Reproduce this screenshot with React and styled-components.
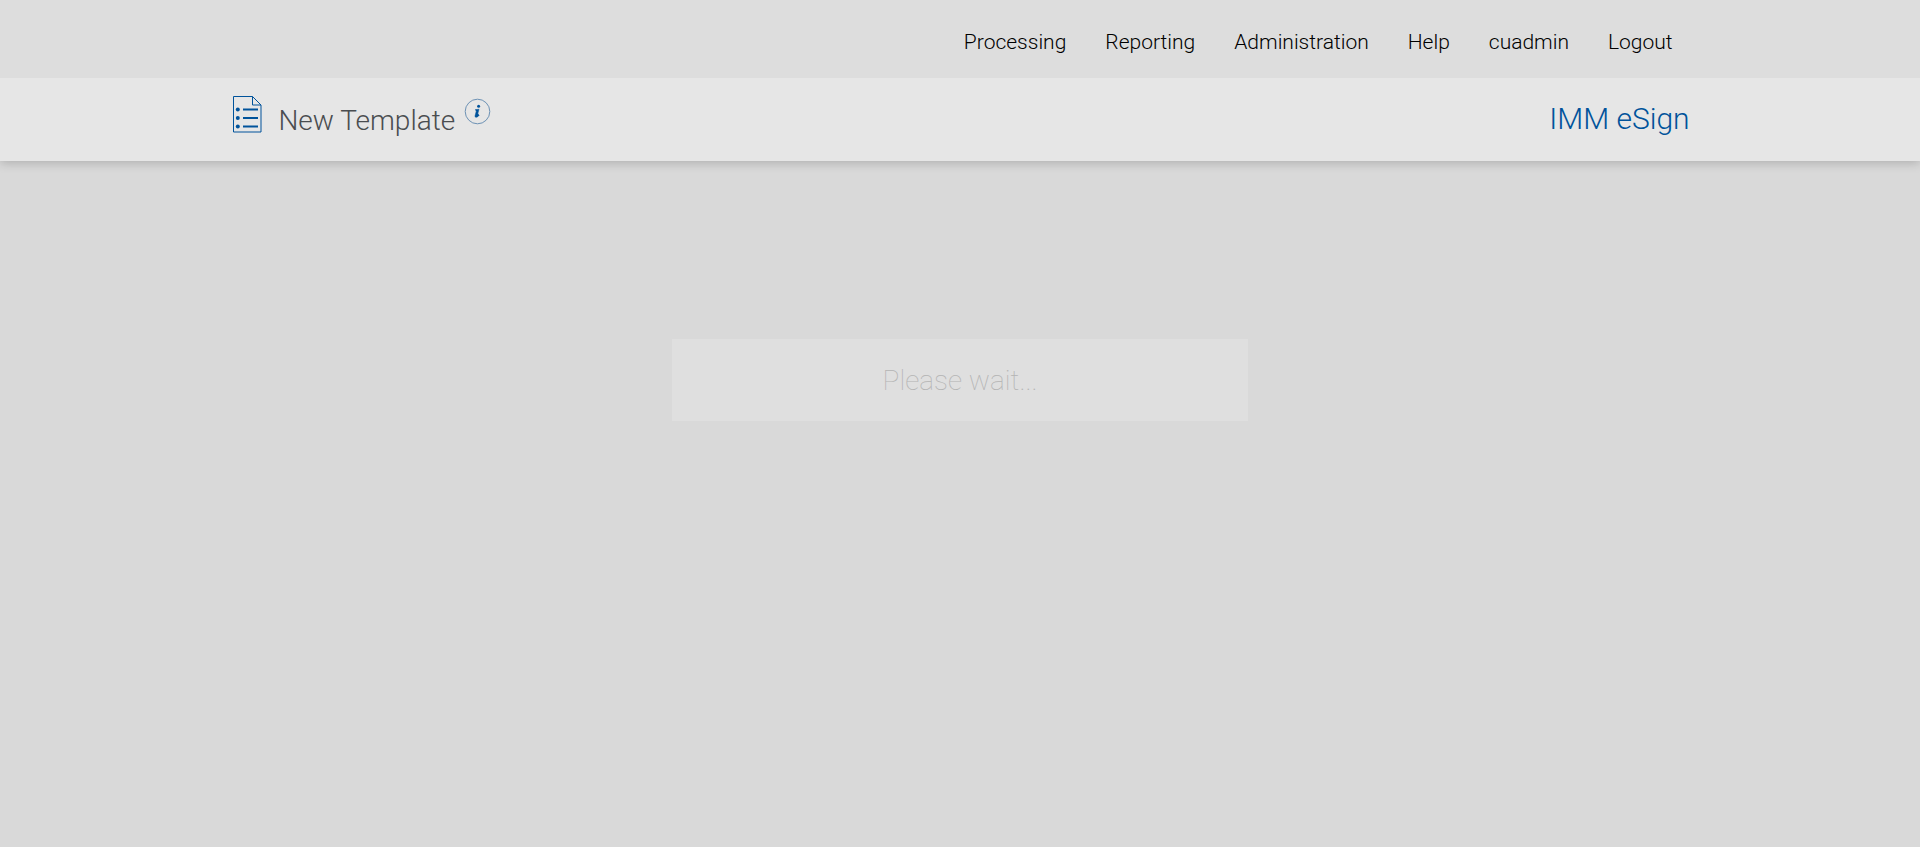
import React from "react";
import styled, { createGlobalStyle } from "styled-components";

const GlobalStyle = createGlobalStyle`
  * { box-sizing: border-box; }
  body {
    margin: 0;
    background: #d9d9d9;
    font-family: Roboto, "Liberation Sans", sans-serif;
    font-weight: 300;
  }
`;

const Container = styled.div`
  width: 76%;
  margin: 0 auto;
  display: flex;
  align-items: center;
`;

const TopBar = styled.header`
  position: relative;
  z-index: 1;
  background: #dddddd;
`;

const Nav = styled.nav`
  flex: 1;
  display: flex;
  justify-content: flex-end;
  gap: 39px;
  padding: 30px 17px 24px 0;
`;

const NavLink = styled.a`
  color: #000;
  font-size: 21px;
  line-height: 24px;
  text-decoration: none;
`;

const TitleBar = styled.div`
  position: relative;
  background: #e6e6e6;
  box-shadow: 0 2px 10px rgba(0, 0, 0, 0.2);
`;

const TitleRow = styled(Container)`
  align-items: flex-start;
  padding: 18px 0 22px 2px;
`;

const PageTitle = styled.h1`
  margin: 0 9px 0 16px;
  padding-top: 7px;
  color: #4a4d50;
  font-size: 28px;
  line-height: 36px;
  font-weight: 300;
`;

const InfoButton = styled.button`
  margin: 2px 0 0;
  padding: 0;
  border: 0;
  background: none;
  line-height: 0;
`;

const Brand = styled.div`
  margin-left: auto;
  padding-top: 4px;
  color: #00539b;
  font-size: 30px;
  line-height: 38px;
`;

const Main = styled.main`
  display: flex;
  justify-content: center;
  padding: 178px 0;
`;

const WaitPanel = styled.div`
  width: 30%;
  padding: 24px 0 22px;
  background: #dfdfdf;
  color: #b4b4b4;
  font-size: 28px;
  font-weight: 100;
  line-height: 36px;
  text-align: center;
`;

const links = ["Processing", "Reporting", "Administration", "Help", "cuadmin", "Logout"];

function TemplateIcon() {
  return (
    <svg width="30" height="38" viewBox="0 0 30 38" fill="none" stroke="#00539b" aria-hidden="true">
      <path d="M1.5 .5H20.5L29 9V36H1.5Z" />
      <path d="M20.5 .5V9H29" />
      <path d="M11 13.5H26M11 22H26M11 30.5H26" strokeWidth="1.8" />
      <g fill="#00539b" stroke="none">
        <circle cx="5.8" cy="13.5" r="2" />
        <circle cx="5.8" cy="22" r="2" />
        <circle cx="5.8" cy="30.5" r="2" />
      </g>
    </svg>
  );
}

function InfoIcon() {
  return (
    <svg width="27" height="27" viewBox="0 0 27 27" aria-hidden="true">
      <circle cx="13.5" cy="13.5" r="12.3" fill="none" stroke="#6c91b4" />
      <circle cx="14.6" cy="8.3" r="1.5" fill="#00539b" />
      <path d="M11.2 11.8L15 11.2L13.1 18.2Q13 18.8 13.5 18.4L15 17.1M11.2 11.8H12.6L11 18Q10.9 19.6 12.5 19.3Q14 18.9 15.3 17.2" fill="#00539b" stroke="#00539b" strokeWidth=".5" />
    </svg>
  );
}

export default function App() {
  return (
    <>
      <GlobalStyle />
      <TopBar>
        <Container>
          <Nav>
            {links.map((name) => (
              <NavLink key={name} href="#">{name}</NavLink>
            ))}
          </Nav>
        </Container>
      </TopBar>
      <TitleBar>
        <TitleRow>
          <TemplateIcon />
          <PageTitle>New Template</PageTitle>
          <InfoButton type="button" aria-label="Information">
            <InfoIcon />
          </InfoButton>
          <Brand>IMM eSign</Brand>
        </TitleRow>
      </TitleBar>
      <Main>
        <WaitPanel role="status">Please wait...</WaitPanel>
      </Main>
    </>
  );
}
